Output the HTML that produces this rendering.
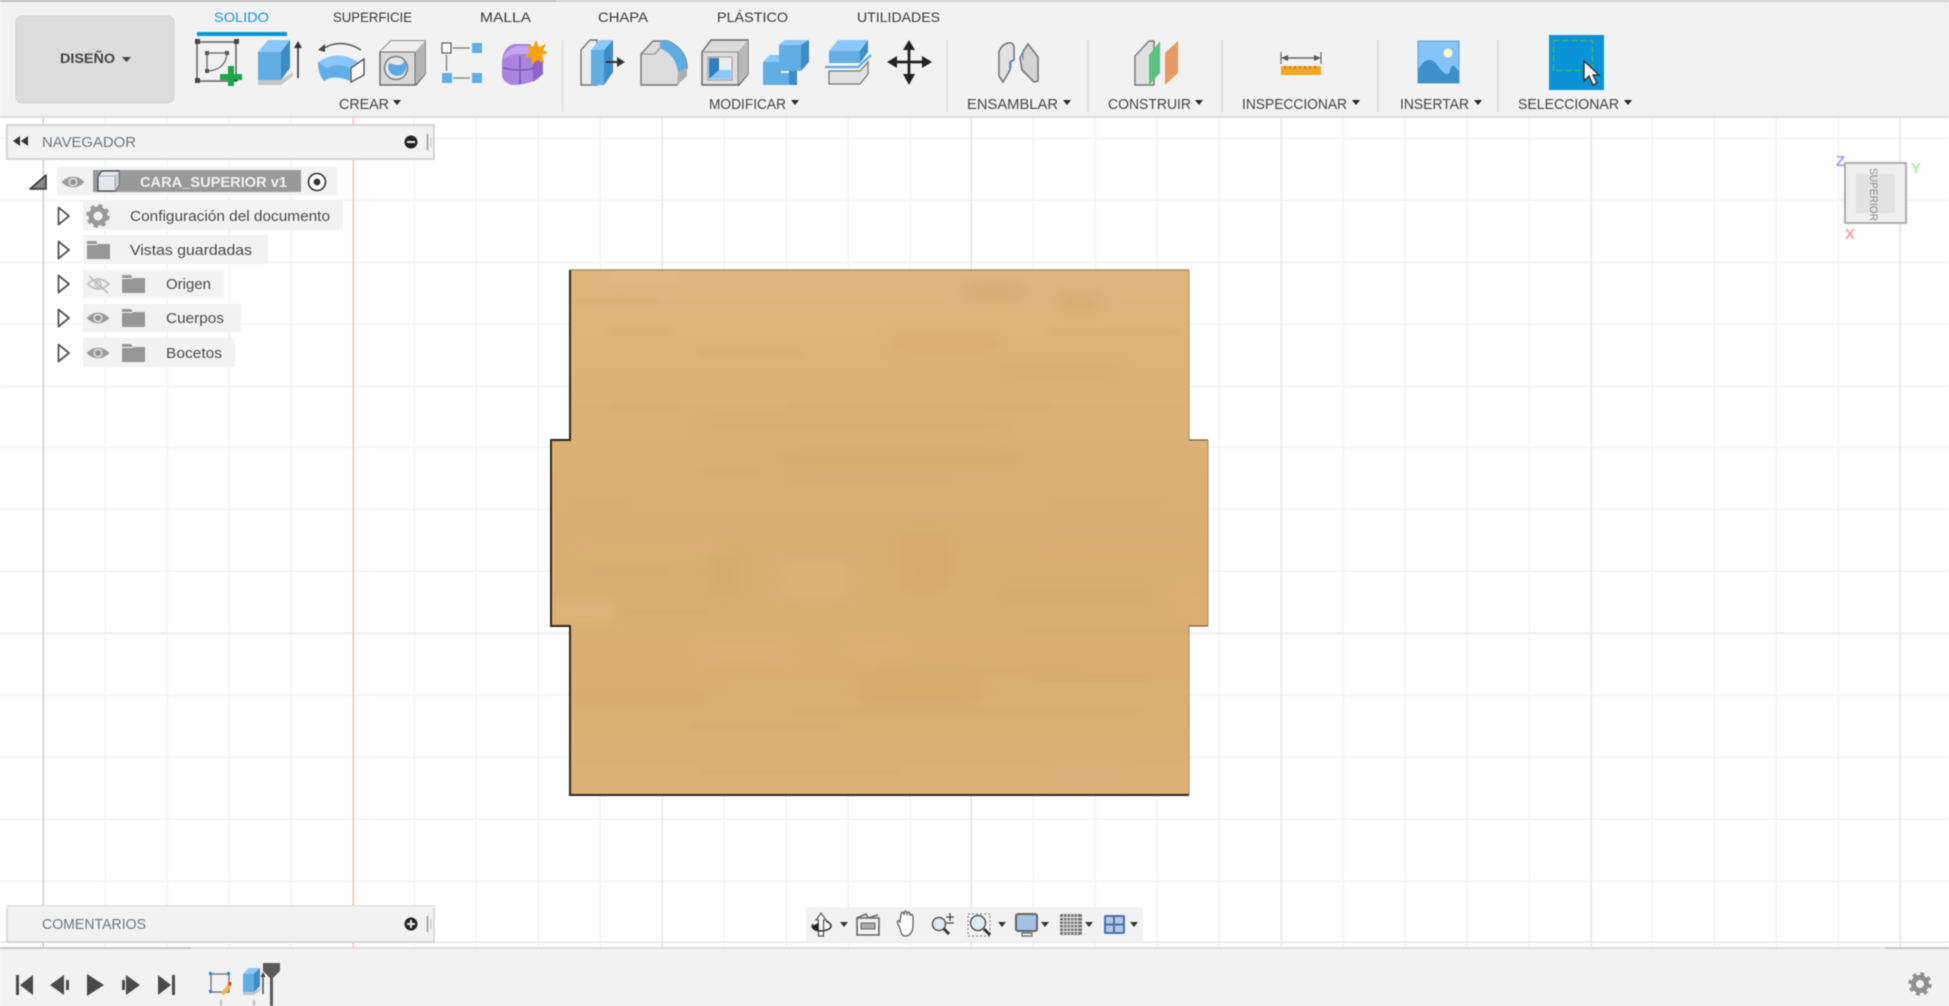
<!DOCTYPE html>
<html lang="es"><head><meta charset="utf-8"><title>CARA_SUPERIOR v1</title>
<style>
html,body{margin:0;padding:0;width:1949px;height:1006px;overflow:hidden;background:#fff}
svg{display:block;filter:blur(.5px)}
text{font-family:"Liberation Sans",sans-serif;font-size:14px;fill:#3f3f3f}
.t{font-size:14px;fill:#383838}
.l{font-size:15px;fill:#444}
.n{font-size:15px;fill:#4a4a4a}
.h{font-size:15px;fill:#70757c}
</style></head><body>
<svg width="1949" height="1006" viewBox="0 0 1949 1006" xmlns="http://www.w3.org/2000/svg">
<defs>
<filter id="b6" x="-50%" y="-50%" width="200%" height="200%"><feGaussianBlur stdDeviation="7"/></filter>
<filter id="b3" x="-20%" y="-300%" width="140%" height="700%"><feGaussianBlur stdDeviation="2.5"/></filter>
<filter id="sh" x="-20%" y="-20%" width="140%" height="140%"><feGaussianBlur stdDeviation="2"/></filter>
<linearGradient id="wood" x1="0" y1="0" x2="0" y2="1">
<stop offset="0" stop-color="#e0b67f"/><stop offset=".25" stop-color="#ddb277"/><stop offset=".5" stop-color="#daae72"/><stop offset=".75" stop-color="#dbae70"/><stop offset="1" stop-color="#ddb278"/>
</linearGradient>
<clipPath id="wc"><path d="M570 270H1189V440H1208V626H1189V795H570V626H551V440H570Z"/></clipPath>
<symbol id="eye" viewBox="-12 -9 24 18" overflow="visible"><path d="M-11.5 0Q0-11 11.5 0Q0 11-11.5 0Z" fill="#9b9b9b"/><circle r="4.6" fill="#d8d8d8"/><circle r="2.8" fill="#8f8f8f"/></symbol>
<symbol id="folder" viewBox="0 0 24 20" overflow="visible"><path d="M0 1H9L11 4H23V19H0Z" fill="#969696"/><path d="M0 4.5H10L11 3.5" stroke="#f2f2f2" stroke-width="1" fill="none"/></symbol>
<symbol id="tri" viewBox="0 0 14 20" overflow="visible"><path d="M1.5 1.5L12 10L1.5 18.5Z" fill="#fff" stroke="#555" stroke-width="1.8" stroke-linejoin="round"/></symbol>
</defs>

<!-- viewport grid -->
<rect width="1949" height="1006" fill="#fff"/>
<path shape-rendering="crispEdges" stroke="#f3f3f3" stroke-width="1.5" fill="none" d="M105 117V948M167 117V948M229 117V948M291 117V948M414 117V948M476 117V948M538 117V948M600 117V948M724 117V948M786 117V948M848 117V948M910 117V948M1033 117V948M1095 117V948M1157 117V948M1219 117V948M1343 117V948M1405 117V948M1467 117V948M1529 117V948M1652 117V948M1714 117V948M1776 117V948M1838 117V948M0 138H1949M0 200H1949M0 262H1949M0 324H1949M0 386H1949M0 447H1949M0 509H1949M0 571H1949M0 695H1949M0 757H1949M0 819H1949M0 881H1949"/>
<path shape-rendering="crispEdges" stroke="#e6e6e6" stroke-width="1.5" fill="none" d="M662 117V948M971 117V948M1281 117V948M1591 117V948M1900 117V948M0 633H1949M0 942H1949"/>
<path shape-rendering="crispEdges" stroke="#cfcfcf" stroke-width="1.5" fill="none" d="M43 117V948"/>
<path shape-rendering="crispEdges" stroke="#f6bcbc" stroke-width="1.5" fill="none" d="M353 117V948"/>

<!-- wood body -->
<g clip-path="url(#wc)">
<rect x="540" y="260" width="680" height="545" fill="url(#wood)"/>
<g filter="url(#b6)" opacity=".6">
<rect x="610" y="268" width="70" height="12" fill="#e8bf88"/>
<rect x="965" y="285" width="60" height="14" fill="#cfa56c"/>
<rect x="1060" y="295" width="40" height="14" fill="#cfa56c"/>
<rect x="890" y="335" width="110" height="16" fill="#dca971"/>
<rect x="1000" y="365" width="120" height="12" fill="#d1a96d"/>
<rect x="700" y="418" width="300" height="8" fill="#d3a86c"/>
<rect x="780" y="455" width="240" height="10" fill="#d3a568"/>
<rect x="570" y="545" width="150" height="8" fill="#e0ad74"/>
<rect x="710" y="555" width="30" height="40" fill="#cfa96a"/>
<rect x="780" y="560" width="70" height="40" fill="#e0b47f"/>
<rect x="900" y="530" width="50" height="60" fill="#d6a768"/>
<rect x="1050" y="545" width="150" height="12" fill="#e0ac74"/>
<rect x="1000" y="590" width="150" height="8" fill="#cfa366"/>
<rect x="700" y="640" width="90" height="22" fill="#e1b07a"/>
<rect x="850" y="640" width="50" height="15" fill="#e2b17a"/>
<rect x="860" y="680" width="120" height="24" fill="#d4a666"/>
<rect x="570" y="690" width="140" height="16" fill="#d6a76a"/>
<rect x="1060" y="765" width="60" height="22" fill="#e0b080"/>
<rect x="1180" y="580" width="30" height="40" fill="#e0ae74"/>
<rect x="555" y="600" width="60" height="24" fill="#dfb97e"/>
</g>
<g filter="url(#b3)" fill="#cfa56b" opacity=".35">
<rect x="610" y="330" width="60" height="3"/><rect x="700" y="352" width="100" height="3"/><rect x="790" y="405" width="260" height="3"/><rect x="610" y="405" width="70" height="3"/>
<rect x="790" y="480" width="160" height="3"/><rect x="590" y="570" width="80" height="3"/><rect x="620" y="610" width="90" height="3"/><rect x="1020" y="628" width="180" height="3"/><rect x="880" y="668" width="200" height="3"/><rect x="690" y="725" width="150" height="3"/><rect x="1030" y="675" width="120" height="3"/>
<rect x="570" y="300" width="90" height="3"/><rect x="700" y="470" width="60" height="3"/><rect x="570" y="500" width="60" height="3"/><rect x="1050" y="500" width="110" height="3"/><rect x="790" y="710" width="350" height="3"/><rect x="700" y="770" width="200" height="3"/><rect x="1050" y="330" width="130" height="3"/>
</g>
</g>
<path d="M570 270H1189" stroke="#a98d63" stroke-width="1.5" fill="none"/>
<path d="M1189 270V440M1208 440V626M1189 626V795" stroke="#a58c67" stroke-width="1" fill="none"/>
<path d="M1189 440H1208M1189 626H1208" stroke="#6f5f48" stroke-width="1.2" fill="none"/>
<path d="M570 270V440H551V626H570V795H1189" stroke="#2a2520" stroke-width="2" fill="none"/>

<!-- view cube -->
<rect x="1845" y="163" width="61" height="60" fill="#aaa" filter="url(#sh)" opacity=".35"/>
<rect x="1845" y="163" width="61" height="60" fill="#efefef" stroke="#a2a2a2" stroke-width="1.6"/>
<rect x="1856" y="174" width="39" height="39" fill="#e2e2e2"/>
<text transform="translate(1870,168) rotate(90)" textLength="53" lengthAdjust="spacingAndGlyphs" style="font-size:11px;fill:#8e8e8e">SUPERIOR</text>
<text x="1836" y="166" style="font-size:15px;font-weight:bold;fill:#9c9cf4">Z</text>
<text x="1911" y="173" style="font-size:15px;font-weight:bold;fill:#a9efa9">Y</text>
<text x="1845" y="239" style="font-size:15px;font-weight:bold;fill:#f5a3a3">X</text>

<!-- top toolbar -->
<rect x="0" y="0" width="1949" height="117" fill="#f2f2f2"/>
<rect x="0" y="0" width="556" height="2" fill="#bdbdbd"/>
<rect x="556" y="0" width="1393" height="2" fill="#d2d2d2"/>
<rect x="0" y="116" width="1949" height="2" fill="#dcdcdc"/>
<rect x="16" y="16" width="158" height="87" rx="6" fill="#dcdcdc" stroke="#d2d2d2"/>
<text x="60" y="63" textLength="55" lengthAdjust="spacingAndGlyphs" style="font-size:14px;font-weight:bold;fill:#444">DISEÑO</text>
<path d="M122 57h9l-4.500 5z" fill="#444"/>

<text x="214" y="22" textLength="55" lengthAdjust="spacingAndGlyphs" style="font-size:14px;fill:#1e96d8">SOLIDO</text>
<rect x="197" y="32" width="90" height="4" fill="#0696d7"/>
<text class="t" x="333" y="22" textLength="79" lengthAdjust="spacingAndGlyphs">SUPERFICIE</text>
<text class="t" x="480" y="22" textLength="51" lengthAdjust="spacingAndGlyphs">MALLA</text>
<text class="t" x="598" y="22" textLength="50" lengthAdjust="spacingAndGlyphs">CHAPA</text>
<text class="t" x="717" y="22" textLength="71" lengthAdjust="spacingAndGlyphs">PLÁSTICO</text>
<text class="t" x="857" y="22" textLength="83" lengthAdjust="spacingAndGlyphs">UTILIDADES</text>

<!-- separators -->
<path d="M562.5 40V112M947 40V112M1088 40V112M1222 40V112M1378 40V112M1498 40V112" stroke="#dadada" stroke-width="1.5"/>

<!-- labels -->
<text class="l" x="339" y="109" textLength="50" lengthAdjust="spacingAndGlyphs">CREAR</text><path d="M393 100h8l-4 5z" fill="#222"/>
<text class="l" x="709" y="109" textLength="77" lengthAdjust="spacingAndGlyphs">MODIFICAR</text><path d="M791 100h8l-4 5z" fill="#222"/>
<text class="l" x="967" y="109" textLength="91" lengthAdjust="spacingAndGlyphs">ENSAMBLAR</text><path d="M1063 100h8l-4 5z" fill="#222"/>
<text class="l" x="1108" y="109" textLength="83" lengthAdjust="spacingAndGlyphs">CONSTRUIR</text><path d="M1195 100h8l-4 5z" fill="#222"/>
<text class="l" x="1242" y="109" textLength="105" lengthAdjust="spacingAndGlyphs">INSPECCIONAR</text><path d="M1352 100h8l-4 5z" fill="#222"/>
<text class="l" x="1400" y="109" textLength="69" lengthAdjust="spacingAndGlyphs">INSERTAR</text><path d="M1474 100h8l-4 5z" fill="#222"/>
<text class="l" x="1518" y="109" textLength="101" lengthAdjust="spacingAndGlyphs">SELECCIONAR</text><path d="M1624 100h8l-4 5z" fill="#222"/>

<!-- sketch icon -->
<rect x="197" y="42" width="39" height="39" fill="none" stroke="#6a6a6a" stroke-width="1.6"/>
<path d="M195 39h5v5h-5zM234 39h5v5h-5zM195 78h5v5h-5zM234 78h4v3h-4z" fill="#444"/>
<path d="M207 53V71M207 53H227M227 53Q226 69 209 71" fill="none" stroke="#777" stroke-width="1.5"/>
<path d="M205 51h4v4h-4zM225 51h4v4h-4zM205 69h4v4h-4z" fill="#555"/>
<path d="M228 66h6v8h8v6h-8v6h-6v-6h-8v-6h8z" fill="#1ca54a"/>

<!-- extrude -->
<path d="M258 80H281L293 72V76L281 85H258Z" fill="#c6c6c6"/>
<path d="M258 52H281V80H258Z" fill="#62ade4"/>
<path d="M258 52L268 40H290L281 52Z" fill="#8bc7fb"/>
<path d="M281 52L290 40V68L281 80Z" fill="#3d8bc5"/>
<path d="M298 78V46" stroke="#333" stroke-width="1.6"/><path d="M294 48L298 41L302 48Z" fill="#333"/>

<!-- revolve -->
<path d="M321 50Q340 37 361 50" fill="none" stroke="#555" stroke-width="1.4"/><path d="M318 50L325 44V52Z" fill="#444"/>
<path d="M318 62Q338 49 358 62L350 68Q338 62 327 68Z" fill="#8ac6fa"/>
<path d="M318 62L327 68Q338 62 350 68V81Q334 74 324 81Q318 74 318 62Z" fill="#61aee6"/>
<path d="M351 68L364 59V75L351 82Z" fill="#fff" stroke="#555" stroke-width="1.4"/>

<!-- hole -->
<path d="M380 52L391 41H425V74L416 85H380Z" fill="#d8d8d8" stroke="#6d6d6d" stroke-width="1.5"/>
<path d="M415 52L425 41V74L415 85Z" fill="#b4b4b4"/>
<path d="M380 52L391 41H425L415 52Z" fill="#efefef"/>
<path d="M380 52H415V85" fill="none" stroke="#6d6d6d" stroke-width="1"/>
<circle cx="396" cy="68" r="11.500" fill="#e6e6e6" stroke="#7b7b7b" stroke-width="1.500"/>
<path d="M389 63A9 9 0 1 0 404 61Q402 68 389 63Z" fill="#5ea9e2"/>

<!-- pattern -->
<rect x="442" y="43" width="9" height="10" fill="#fff" stroke="#555" stroke-width="1.200"/>
<rect x="472" y="43" width="10" height="10" fill="#61ade6"/>
<rect x="442" y="73" width="10" height="10" fill="#61ade6"/>
<rect x="472" y="73" width="10" height="10" fill="#61ade6"/>
<path d="M453 48H470M453 78H470M446.500 55V71" stroke="#888" stroke-width="1.500"/>

<!-- form -->
<path d="M502 62Q503 47 514 44H530L538 54L543 62V74L536 80Q525 85 512 85Q502 82 502 74Z" fill="#a884de"/>
<path d="M504 56Q510 47 518 46H532L538 54H516Q508 54 504 60Z" fill="#c4a5f1"/>
<path d="M533 58L543 62V74L533 82Z" fill="#8c66c6"/>
<path d="M503 68Q520 72 535 68M520 56V84" stroke="#7a54b5" stroke-width="1.500" fill="none"/>
<path d="M536 40L539 47L546 44L543 50L548 53L542 55L544 63L537 60L532 65L531 58L525 56L530 52L527 45L533 47Z" fill="#f5a30f"/>

<!-- press pull -->
<path d="M581 85V50L590 40H597V85Z" fill="#ececec" stroke="#777" stroke-width="1.400"/>
<path d="M591 50L600 40H613V72L604 85H591Z" fill="#62ade4"/>
<path d="M604 50L613 40V72L604 85Z" fill="#3e8cc6"/>
<path d="M591 50L600 40H613L604 50Z" fill="#8bc7fb"/>
<path d="M606 62h12" stroke="#333" stroke-width="2"/><path d="M617 57L625 62L617 67Z" fill="#333"/>

<!-- fillet -->
<path d="M641 85V54L653 41H668Q687 50 687 68L677 85Z" fill="#dcdcdc" stroke="#777" stroke-width="1.400"/>
<path d="M660 41H668Q687 50 687 68L678 72Q676 55 660 48Z" fill="#5fabe3"/>
<path d="M641 54H655L660 48" fill="none" stroke="#888"/>
<path d="M678 72L687 68V76L677 85Z" fill="#b0b0b0"/>

<!-- shell -->
<path d="M702 52L711 40H748V74L739 85H702Z" fill="#dcdcdc" stroke="#666" stroke-width="1.400"/>
<path d="M738 52L748 40V74L738 85Z" fill="#b8b8b8"/>
<path d="M702 52H738V85" fill="none" stroke="#888"/>
<rect x="708" y="57" width="24" height="23" fill="#ececec" stroke="#888" stroke-width=".8"/>
<path d="M709 58H719V70H731V79H709Z" fill="#8bc7fb"/><path d="M709 58H719V70L709 79Z" fill="#2f7fbf"/>

<!-- combine -->
<path d="M763 62L770 55H781V73H796V76L788 85H763Z" fill="#62ade4"/>
<path d="M763 62L770 55H781V62Z" fill="#8bc7fb"/>
<path d="M779 45L785 40H809V62L800 71H779Z" fill="#62ade4"/>
<path d="M779 45L785 40H809L803 45Z" fill="#8bc7fb"/>
<path d="M801 45L809 40V62L801 71Z" fill="#3e8cc6"/>
<path d="M789 71H797V85H789Z" fill="#3e8cc6"/>

<!-- split -->
<path d="M829 51L838 40H868L860 51Z" fill="#8bc7fb"/>
<path d="M829 51H860V63H829Z" fill="#62ade4"/>
<path d="M860 51L868 40V52L860 63Z" fill="#3e8cc6"/>
<path d="M825 67H858L871 55" fill="none" stroke="#4da6e8" stroke-width="2"/>
<path d="M829 71H860L868 62V74L860 84H829Z" fill="#e2e2e2" stroke="#777" stroke-width="1.300"/>

<!-- move -->
<path d="M909 43V81M891 62H928" stroke="#222" stroke-width="2.800"/>
<path d="M909 40L915 50H903ZM909 85L915 74H903ZM887 62L897 56V68ZM932 62L922 56V68Z" fill="#222"/>

<!-- assemble -->
<path d="M999 52Q1001 45 1008 43Q1014 42 1014 48V60L1010 62V70L1003 82L999 76Z" fill="#e2e2e2" stroke="#777" stroke-width="1.600"/>
<path d="M1020 58L1024 50L1028 44L1038 57V81L1034 82L1022 70Z" fill="#d4d4d4" stroke="#777" stroke-width="1.600"/>
<path d="M1011 60V68M1023 50V60" stroke="#3ea0e4" stroke-width="1.200"/>

<!-- construct -->
<path d="M1135 85V56L1149 41H1154V85Z" fill="#e0e0e0" stroke="#777" stroke-width="1.400"/>
<path d="M1149 55L1160 41V73L1149 85Z" fill="#5fc17f"/>
<path d="M1165 53L1178 41V73L1165 85Z" fill="#e69a66"/>

<!-- measure -->
<path d="M1281 52V64M1321 52V64" stroke="#666" stroke-width="1.200"/>
<path d="M1284 58H1318" stroke="#666" stroke-width="1.400"/><path d="M1281 58L1288 55V61ZM1321 58L1314 55V61Z" fill="#555"/>
<rect x="1281" y="66" width="40" height="9" fill="#f5a623"/>
<path d="M1285 66v3M1290 66v3M1295 66v3M1300 66v3M1305 66v3M1310 66v3M1315 66v3" stroke="#9a6a1a"/>

<!-- image -->
<rect x="1418" y="41" width="41" height="42" fill="#85c4fb" stroke="#5aa1d8"/>
<circle cx="1448" cy="53" r="4.500" fill="#fff9c8"/>
<path d="M1418 70Q1428 52 1438 66T1450 70T1459 72V83H1418Z" fill="#3f90c9"/>

<!-- select -->
<rect x="1549" y="35" width="55" height="55" fill="#0a93d6"/>
<rect x="1553.500" y="40.500" width="39" height="30" fill="none" stroke="#39b86a" stroke-width="1.500" stroke-dasharray="6 3"/>
<path d="M1584 61V81L1589 76L1593 85L1597 83L1593 75H1599Z" fill="#fff" stroke="#333" stroke-width="1.400"/>

<!-- navigator -->
<rect x="7" y="125" width="427" height="34" fill="#f2f2f2" stroke="#d3d3d3" stroke-width="2"/>
<path d="M13 141L20 136V146ZM21 141L28 136V146Z" fill="#333"/>
<text class="h" x="42" y="147" textLength="94" lengthAdjust="spacingAndGlyphs">NAVEGADOR</text>
<circle cx="411" cy="142" r="6.500" fill="#222"/><rect x="407" y="141" width="8" height="2" fill="#eee"/>
<path d="M427.500 134V150" stroke="#aaa" stroke-width="2"/><path d="M431 137V147" stroke="#ccc" stroke-width="1.300"/>

<path d="M46 175V189H30Z" fill="#888" stroke="#333" stroke-width="1.500" stroke-linejoin="round"/>
<rect x="57" y="167" width="280" height="28" fill="#f2f2f2"/>
<use href="#eye" x="61" y="173" width="24" height="18"/>
<rect x="93" y="170" width="208" height="22" fill="#999"/>
<path d="M98 176L102 171H119V185L115 191H98Z" fill="#e4e8ee" stroke="#444" stroke-width="1.200"/>
<path d="M115 176L119 171V185L115 191Z" fill="#c5c9cf"/><path d="M98 176H115V191" fill="none" stroke="#999" stroke-width=".8"/>
<text x="140" y="187" textLength="147" lengthAdjust="spacingAndGlyphs" style="font-size:15px;font-weight:bold;fill:#f0f0f0">CARA_SUPERIOR v1</text>
<circle cx="317" cy="182" r="8.500" fill="#fff" stroke="#333" stroke-width="1.600"/><circle cx="317" cy="182" r="3.400" fill="#333"/>

<!-- tree rows -->
<rect x="83" y="201" width="260" height="29" fill="#f2f2f2"/>
<rect x="83" y="235" width="185" height="29" fill="#f2f2f2"/>
<rect x="83" y="270" width="141" height="28" fill="#f2f2f2"/>
<rect x="83" y="304" width="158" height="28" fill="#f2f2f2"/>
<rect x="83" y="338" width="152" height="29" fill="#f2f2f2"/>
<use href="#tri" x="57" y="206" width="14" height="20"/>
<use href="#tri" x="57" y="240" width="14" height="20"/>
<use href="#tri" x="57" y="274" width="14" height="20"/>
<use href="#tri" x="57" y="308" width="14" height="20"/>
<use href="#tri" x="57" y="343" width="14" height="20"/>

<circle cx="98" cy="216" r="7" fill="none" stroke="#999" stroke-width="5"/>
<circle cx="98" cy="216" r="10" fill="none" stroke="#999" stroke-width="3.600" stroke-dasharray="4 3.850"/>

<text class="n" x="130" y="221" textLength="200" lengthAdjust="spacingAndGlyphs">Configuración del documento</text>
<use href="#folder" x="87" y="240" width="24" height="20"/>
<text class="n" x="130" y="255" textLength="122" lengthAdjust="spacingAndGlyphs">Vistas guardadas</text>

<path d="M88 284Q98 274 109 284Q98 294 88 284Z" fill="none" stroke="#bbb" stroke-width="1.600"/><circle cx="98" cy="284" r="3" fill="none" stroke="#bbb" stroke-width="1.400"/><path d="M89 276L108 293" stroke="#bbb" stroke-width="1.600"/>
<use href="#folder" x="122" y="274" width="24" height="20"/>
<text class="n" x="166" y="289" textLength="45" lengthAdjust="spacingAndGlyphs">Origen</text>

<use href="#eye" x="86" y="309" width="24" height="18"/>
<use href="#folder" x="122" y="308" width="24" height="20"/>
<text class="n" x="166" y="323" textLength="58" lengthAdjust="spacingAndGlyphs">Cuerpos</text>

<use href="#eye" x="86" y="344" width="24" height="18"/>
<use href="#folder" x="122" y="343" width="24" height="20"/>
<text class="n" x="166" y="358" textLength="56" lengthAdjust="spacingAndGlyphs">Bocetos</text>

<!-- comments -->
<rect x="7" y="906" width="427" height="36" fill="#f2f2f2" stroke="#d3d3d3" stroke-width="1.600"/>
<rect x="6" y="906" width="430" height="2" fill="#f2f2f2"/>
<text class="h" x="42" y="929" textLength="104" lengthAdjust="spacingAndGlyphs">COMENTARIOS</text>
<circle cx="411" cy="924" r="6.500" fill="#222"/><path d="M407 924h8M411 920v8" stroke="#eee" stroke-width="2"/>
<path d="M427.500 916V932" stroke="#aaa" stroke-width="2"/><path d="M431 919V929" stroke="#ccc" stroke-width="1.300"/>

<!-- nav bar -->
<rect x="806" y="907" width="337" height="35" fill="#f2f2f2"/>
<path d="M821 913L826 920H823.500V936H818.500V920H816Z" fill="#fff" stroke="#555" stroke-width="1.200"/>
<path d="M813 924Q810 930 821 931Q832 930 831 925Q829 922 826 921" fill="none" stroke="#333" stroke-width="1.500"/><path d="M811 927L818 923V931Z" fill="#222"/>
<path d="M840 922h8l-4 5z" fill="#333"/>
<path d="M857 918H879V935H857Z" fill="#f2f2f2" stroke="#666" stroke-width="1.600"/><path d="M857 918L866 914L868 918M868 918L878 915" stroke="#666" stroke-width="1.600" fill="none"/><rect x="861" y="923" width="14" height="6" fill="#aaa" stroke="#666"/>
<path d="M899 926C896 921 898 919 900 922L901 914C902 911 904 912 904 915C904 910 907 910 907 915C908 911 910 911 910 916C911 913 913 914 913 918V925C913 932 910 936 905 936C901 936 901 931 899 926Z" fill="#fff" stroke="#555" stroke-width="1.200"/>
<circle cx="939" cy="924" r="6.500" fill="#dcecec" stroke="#555" stroke-width="1.500"/><path d="M944 929L949 934" stroke="#333" stroke-width="3"/><path d="M946 917h8M950 913v8M946 923h8" stroke="#444" stroke-width="1.300"/>
<rect x="968" y="914" width="22" height="22" fill="none" stroke="#777" stroke-dasharray="2 2"/><circle cx="978" cy="923" r="7.500" fill="#dcecec" stroke="#555" stroke-width="1.500"/><path d="M984 929L990 935" stroke="#333" stroke-width="3"/>
<path d="M998 922h8l-4 5z" fill="#333"/>
<rect x="1016" y="914" width="21" height="17" rx="2" fill="#a6c0e4" stroke="#666" stroke-width="2"/><path d="M1022 933h10v3h-10z" fill="none" stroke="#666" stroke-width="1.200"/>
<path d="M1041 922h8l-4 5z" fill="#333"/>
<rect x="1060" y="914" width="22" height="21" rx="1.500" fill="#767676"/>
<path d="M1060 917.500h22M1060 921h22M1060 924.500h22M1060 928h22M1060 931.500h22M1063.500 914v21M1067 914v21M1070.500 914v21M1074 914v21M1077.500 914v21" stroke="#e8e8e8" stroke-width=".9"/>
<path d="M1085 922h8l-4 5z" fill="#333"/>
<rect x="1104" y="915" width="21" height="19" rx="2" fill="#4d6ea6"/>
<path d="M1106 917h7v6.500h-7zM1115 917h8v6.500h-8zM1106 925.500h7v6.500h-7zM1115 925.500h8v6.500h-8z" fill="#b0c8ea"/>
<path d="M1130 922h8l-4 5z" fill="#333"/>

<!-- bottom bar -->
<rect x="0" y="948" width="1949" height="58" fill="#f2f2f2"/>
<rect x="0" y="947" width="1949" height="2" fill="#dcdcdc"/>
<rect x="0" y="947" width="191" height="2" fill="#c6c6c6"/>
<rect x="1886" y="947" width="63" height="2" fill="#c6c6c6"/>
<path d="M16 975h3v20h-3zM33 975V995L20 985Z" fill="#4a4a4a"/>
<path d="M50 985L64 975V995ZM66 980h3v10h-3z" fill="#4a4a4a"/>
<path d="M87 974L104 985L87 996Z" fill="#4a4a4a"/>
<path d="M122 980h3v10h-3zM126 975L140 985L126 995Z" fill="#4a4a4a"/>
<path d="M158 975V995L171 985ZM172 975h3v20h-3z" fill="#4a4a4a"/>
<rect x="211" y="974" width="18" height="18" fill="none" stroke="#777" stroke-width="1.400"/>
<path d="M209 972h3v3h-3zM227 972h3v3h-3zM209 990h3v3h-3z" fill="#2b82e0"/>
<path d="M221 993L228 984L231 986L224 995Z" fill="#f5b73c"/><rect x="228" y="982" width="3.500" height="3.500" fill="#e8433f"/>
<path d="M243 974L249 968H260V986L254 992H243Z" fill="#62ade4"/><path d="M243 974L249 968H260L254 974Z" fill="#8bc7fb"/><path d="M254 974L260 968V986L254 992Z" fill="#3e8cc6"/>
<path d="M243 992H254L260 988V991L254 995H243Z" fill="#c6c6c6"/>
<path d="M263 994V975" stroke="#444" stroke-width="1.400"/><path d="M260.500 977L263 972L265.500 977Z" fill="#444"/>
<path d="M221 1000V1006M254 1000V1006" stroke="#bbb" stroke-width="2"/>
<path d="M263 963H280V971L273 978H270L263 971Z" fill="#5a5a5a"/>
<rect x="270" y="976" width="3" height="30" fill="#5a5a5a"/>
<circle cx="1920" cy="984" r="6.500" fill="none" stroke="#8f8f8f" stroke-width="5"/>
<circle cx="1920" cy="984" r="10" fill="none" stroke="#8f8f8f" stroke-width="3.400" stroke-dasharray="3.900 3.950"/>
</svg>
</body></html>
